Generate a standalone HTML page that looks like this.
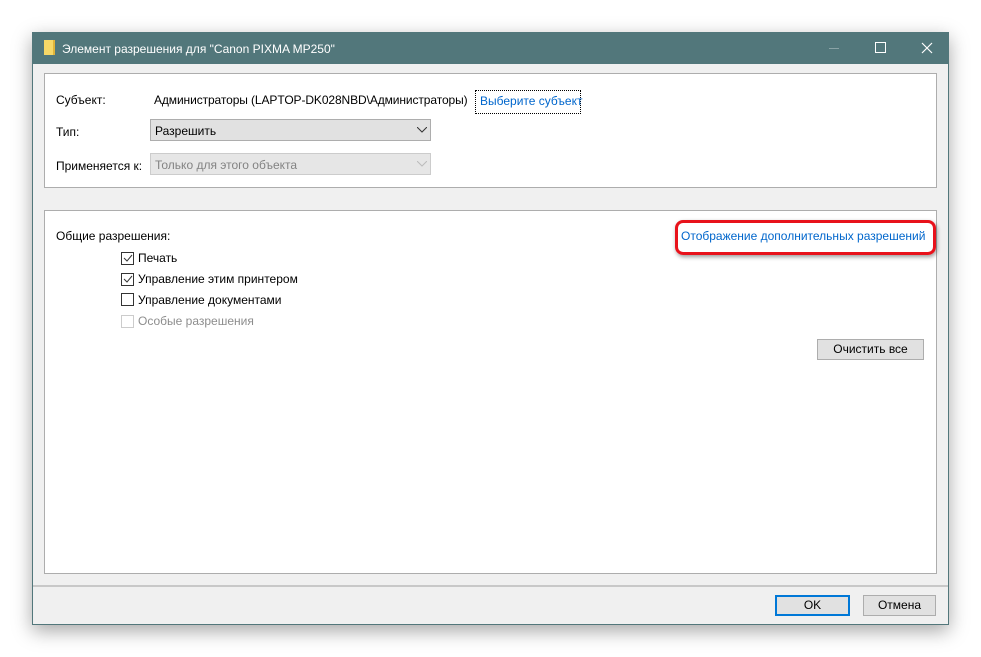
<!DOCTYPE html>
<html><head><meta charset="utf-8"><style>
*{margin:0;padding:0;box-sizing:border-box}
body{width:981px;height:657px;background:#fff;position:relative;overflow:hidden;font-family:"Liberation Sans",sans-serif;font-size:12px;color:#000}
.a{position:absolute}
.win{left:32px;top:32px;width:917px;height:593px;background:#f0f0f0;border:1px solid #52777b;box-shadow:0 6px 18px rgba(0,0,0,.35)}
.tb{left:0;top:0;width:915px;height:31px;background:#52777b;color:#fff;font-size:12px}
.panel{background:#fff;border:1px solid #adadad}
.t{white-space:nowrap;letter-spacing:0}
.combo{border:1px solid #adadad;background:#e1e1e1;height:22px}
.cb{width:13px;height:13px;border:1px solid #333;background:#fff}
.btn{border:1px solid #adadad;background:#e1e1e1;text-align:center;line-height:18px}
</style></head><body>
<div class="a win">
 <div class="a tb">
  <div class="a" style="left:11px;top:7px;width:11px;height:15px;background:#f7d867;border-right:2px solid #e0b43a"></div>
  <div class="a t" style="left:29px;top:9px">Элемент разрешения для "Canon PIXMA MP250"</div>
  <div class="a" style="left:796px;top:15px;width:10px;height:1px;background:#8aa3a6"></div>
  <div class="a" style="left:842px;top:9px;width:11px;height:11px;border:1px solid #fff"></div>
  <svg class="a" style="left:888px;top:9px" width="12" height="12"><path d="M1 1L11 11M11 1L1 11" stroke="#fff" stroke-width="1.2"/></svg>
 </div>
 <div class="a panel" style="left:11px;top:40px;width:893px;height:115px"></div>
 <div class="a panel" style="left:11px;top:177px;width:893px;height:364px"></div>
 <div class="a" style="left:0;top:552px;width:915px;height:2px;background:#c8c8c8"></div>
</div>
<div class="a t" style="left:56px;top:93px">Субъект:</div>
<div class="a t" style="left:154px;top:93px;letter-spacing:-0.1px">Администраторы (LAPTOP-DK028NBD\Администраторы)</div>
<div class="a t" style="left:475px;top:90px;width:106px;height:24px;border:1px dotted #000;color:#0066cc;padding:3px 0 0 4px">Выберите субъект</div>
<div class="a t" style="left:56px;top:125px">Тип:</div>
<div class="a combo" style="left:150px;top:119px;width:281px"><span class="a t" style="left:4px;top:4px">Разрешить</span><svg class="a" style="left:266px;top:7px" width="10" height="6"><path d="M0 0L5 5L10 0" fill="none" stroke="#333"/></svg></div>
<div class="a t" style="left:56px;top:159px">Применяется к:</div>
<div class="a combo" style="left:150px;top:153px;width:281px;border-color:#ccc;background:#e6e6e6;color:#838383"><span class="a t" style="left:4px;top:4px">Только для этого объекта</span><svg class="a" style="left:266px;top:7px" width="10" height="6"><path d="M0 0L5 5L10 0" fill="none" stroke="#bbb"/></svg></div>
<div class="a t" style="left:56px;top:229px">Общие разрешения:</div>
<div class="a t" style="left:681px;top:229px;color:#0066cc">Отображение дополнительных разрешений</div>
<div class="a" style="left:675px;top:220px;width:261px;height:35px;border:3px solid #e8121b;border-radius:8px;box-shadow:1px 2px 4px rgba(0,0,0,.4)"></div>
<div class="a cb" style="left:121px;top:252px"></div><svg class="a" style="left:123px;top:254px" width="10" height="9"><path d="M1 4L4 7L9 1" fill="none" stroke="#333"/></svg>
<div class="a t" style="left:138px;top:251px">Печать</div>
<div class="a cb" style="left:121px;top:273px"></div><svg class="a" style="left:123px;top:275px" width="10" height="9"><path d="M1 4L4 7L9 1" fill="none" stroke="#333"/></svg>
<div class="a t" style="left:138px;top:272px">Управление этим принтером</div>
<div class="a cb" style="left:121px;top:293px"></div>
<div class="a t" style="left:138px;top:293px">Управление документами</div>
<div class="a cb" style="left:121px;top:315px;border-color:#ccc"></div>
<div class="a t" style="left:138px;top:314px;color:#8d8d8d">Особые разрешения</div>
<div class="a btn t" style="left:817px;top:339px;width:107px;height:21px">Очистить все</div>
<div class="a btn t" style="left:775px;top:595px;width:75px;height:21px;border:2px solid #0078d7;line-height:17px">OK</div>
<div class="a btn t" style="left:863px;top:595px;width:73px;height:21px">Отмена</div>
</body></html>
